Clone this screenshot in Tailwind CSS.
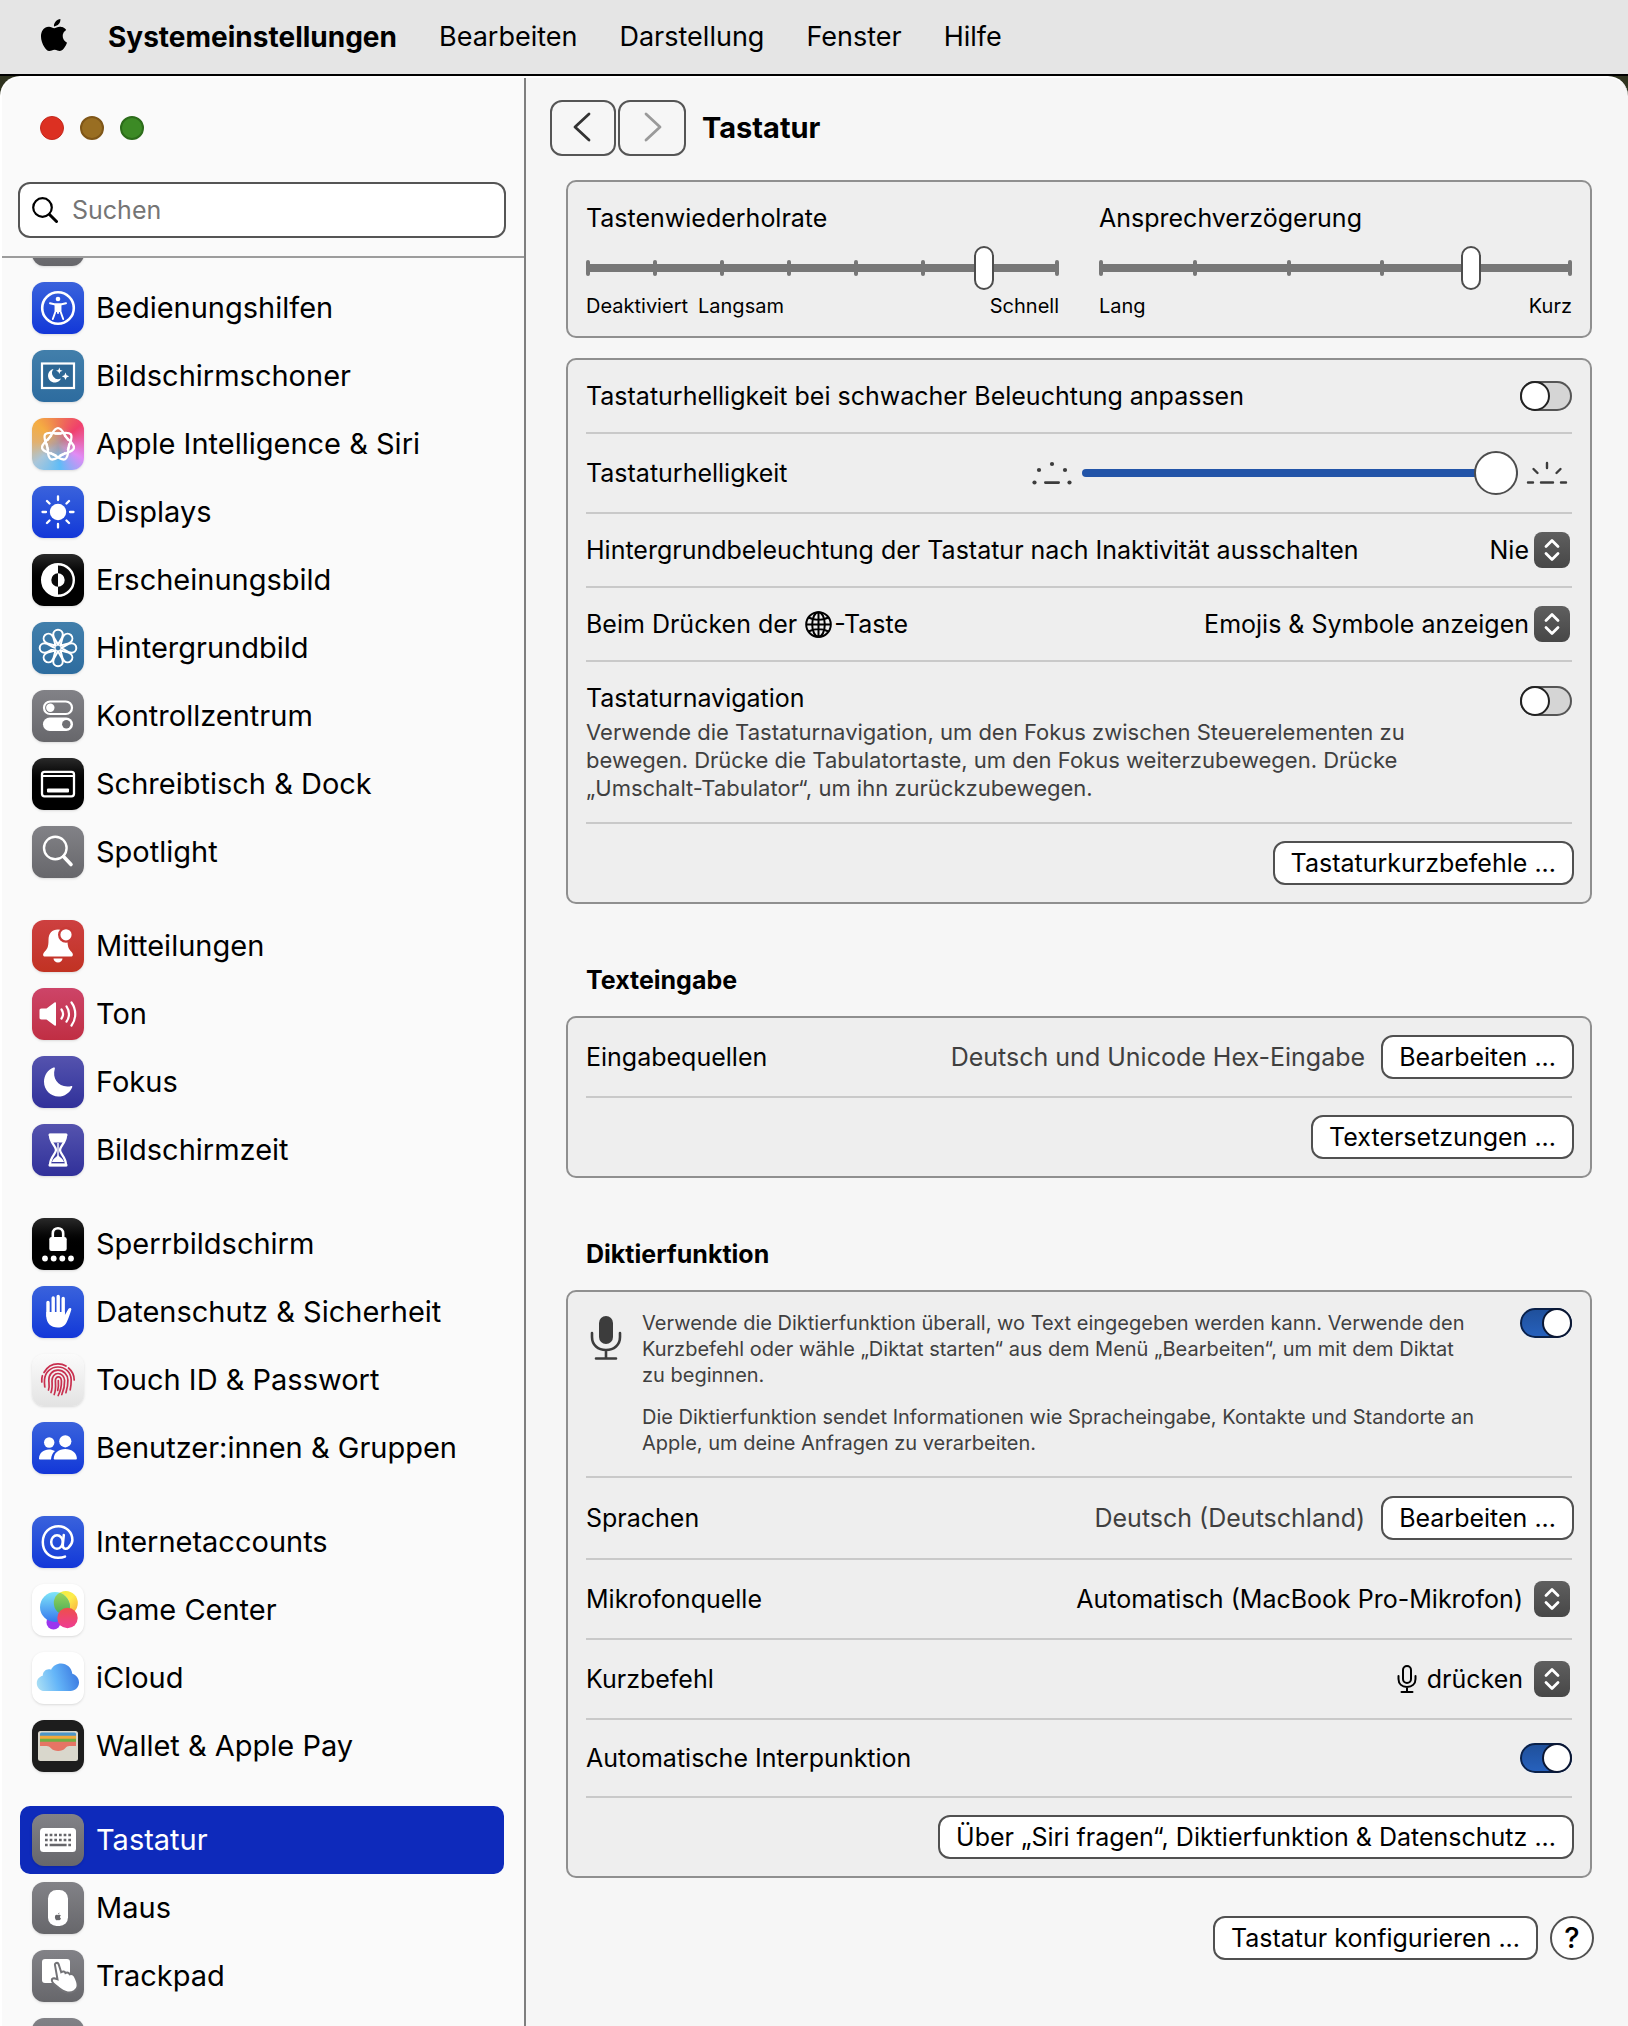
<!DOCTYPE html>
<html lang="de">
<head>
    <meta charset="UTF-8">
    <meta name="viewport" content="width=device-width, initial-scale=1.0">
    <title>Systemeinstellungen – Tastatur</title>
    <script src="https://cdn.jsdelivr.net/npm/@tailwindcss/browser@4"></script>
</head>
<body class="h-screen flex flex-col overflow-hidden bg-[#2f331f] font-['Inter',sans-serif] text-black">

    <!-- Menu bar -->
    <header class="flex h-[76px] shrink-0 items-center border-b-2 border-black bg-[#e5e5e5] pl-10">
        <svg class="h-8 w-7 -mt-1" viewBox="1.5 0 21 24" fill="#000"><path d="M12.152 6.896c-.948 0-2.415-1.078-3.96-1.04-2.04.027-3.91 1.183-4.961 3.014-2.117 3.675-.546 9.103 1.519 12.09 1.013 1.454 2.208 3.09 3.792 3.039 1.52-.065 2.09-.987 3.935-.987 1.831 0 2.35.987 3.96.948 1.637-.026 2.676-1.48 3.676-2.948 1.156-1.688 1.636-3.325 1.662-3.415-.039-.013-3.182-1.221-3.22-4.857-.026-3.04 2.48-4.494 2.597-4.559-1.429-2.09-3.623-2.324-4.39-2.376-2-.156-3.675 1.09-4.61 1.09zM15.53 3.83c.843-1.012 1.4-2.427 1.245-3.83-1.207.052-2.662.805-3.532 1.818-.78.896-1.454 2.338-1.273 3.714 1.338.104 2.715-.688 3.559-1.701"/></svg>
        <nav class="ml-10 flex gap-[42px] text-[27px] leading-8">
            <a href="#" class="text-[28px] leading-8 font-bold">Systemeinstellungen</a>
            <a href="#">Bearbeiten</a>
            <a href="#">Darstellung</a>
            <a href="#">Fenster</a>
            <a href="#">Hilfe</a>
        </nav>
    </header>

    <!-- Window -->
    <div class="flex min-h-0 flex-1 overflow-hidden rounded-t-[20px] border-l-2 border-t-2 border-white bg-[#f6f6f6]">

        <!-- Sidebar -->
        <aside class="flex w-[524px] shrink-0 flex-col border-r-2 border-[#7f7f7f] bg-[#fafafa]">
            <div class="border-b-2 border-[#9c9c9c] pt-[38px] pb-[18px] pl-4 pr-[18px]">
                <div class="flex gap-4 pl-[22px]">
                    <button aria-label="Schließen" class="size-6 rounded-full border border-[#c4281d] bg-[#dc3022]"></button>
                    <button aria-label="Minimieren" class="size-6 rounded-full border-2 border-[#7f5618] bg-[#996e22]"></button>
                    <button aria-label="Zoomen" class="size-6 rounded-full border-2 border-[#2c6c1a] bg-[#3c8a25]"></button>
                </div>
                <label class="mt-[42px] flex h-14 items-center gap-3.5 rounded-xl border-2 border-[#555] bg-white pl-3">
                    <svg class="size-[26px]" viewBox="0 0 26 26" fill="none" stroke="#000" stroke-linecap="round"><circle cx="10.5" cy="10.5" r="9.3" stroke-width="2.2"/><path d="M17.5 17.5l7 7" stroke-width="3"/></svg>
                    <input type="text" placeholder="Suchen" aria-label="Suchen" class="min-w-0 flex-1 bg-transparent text-[25px] leading-8 outline-none placeholder:text-[#757575]">
                </label>
            </div>

            <nav class="min-h-0 flex-1 overflow-hidden pl-[18px] pr-5 text-[29px] leading-8">
                <ul class="-mt-[52px]">
                    <li><a href="#" class="flex h-[68px] items-center gap-3 pl-3">
                        <svg class="size-[52px] rounded-xl bg-linear-to-b from-[#828287] to-[#67676b] shadow-sm" viewBox="0 0 52 52" fill="none" stroke="#fff"><circle cx="26" cy="26" r="13" stroke-width="3"/><circle cx="26" cy="26" r="15.500" stroke-width="3" stroke-dasharray="2 2"/><path d="M26 26V13M26 26l11 7M26 26l-11 7" stroke-width="2"/></svg>
                        Allgemein</a></li>
                    <li><a href="#" class="flex h-[68px] items-center gap-3 pl-3">
                        <svg class="size-[52px] rounded-xl bg-linear-to-b from-[#3a62dc] to-[#1336d8] shadow-sm" viewBox="0 0 52 52" fill="none" stroke="#fff" stroke-linecap="round" stroke-linejoin="round"><circle cx="26" cy="26" r="15.8" stroke-width="2.6"/><circle cx="26" cy="17" r="2.3" fill="#fff" stroke="none"/><path d="M18 21.300l5.500 1.200h5l5.500-1.200" stroke-width="2"/><path d="M23.500 22.500h5v7l2.700 7.500M23.500 22.500v7l-2.700 7.500M26 31v-1" stroke-width="1.900"/><path d="M23.500 22.500h5v7.500h-5z" fill="#fff" stroke="none"/></svg>
                        Bedienungshilfen</a></li>
                    <li><a href="#" class="flex h-[68px] items-center gap-3 pl-3">
                        <svg class="size-[52px] rounded-xl bg-linear-to-b from-[#427fab] to-[#2d6c9f] shadow-sm" viewBox="0 0 52 52" fill="#fff"><rect x="10" y="13.500" width="32" height="24.500" fill="#2d6795" stroke="#fff" stroke-width="2.200"/><path d="M21.500 19a6.800 6.800 0 1 0 7.500 9.500a6.200 6.200 0 0 1-7.500-9.500z"/><path d="M27.300 17.500l.9 2.400 2.400.9-2.400.9-.9 2.400-.9-2.400-2.400-.9 2.400-.9zM33.500 22.500l1.100 2.700 2.700 1.100-2.700 1.100-1.100 2.700-1.100-2.700-2.700-1.100 2.700-1.100z"/></svg>
                        Bildschirmschoner</a></li>
                    <li><a href="#" class="flex h-[68px] items-center gap-3 pl-3">
                        <svg class="size-[52px] rounded-xl bg-[radial-gradient(circle,#b09aa0_0%,#b09aa000_50%),conic-gradient(#ee7a52,#f0406c_50deg,#e08cf5_120deg,#5fbcf7_175deg,#a9c6da_230deg,#e2b06e_275deg,#f5ad42_315deg,#ee7a52)] shadow-sm" viewBox="0 0 52 52" fill="none" stroke="#fff" stroke-width="2.300">
                            <defs><path id="lobe" d="M-8.600-6.860C-5.500-10.800-4-16.300 0-16.300S5.500-10.800 8.600-6.860l2 2.800M-8.600-6.860l-2 2.800"/></defs>
                            <g transform="translate(26 26.500)"><use href="#lobe"/><use href="#lobe" transform="rotate(51.430)"/><use href="#lobe" transform="rotate(102.860)"/><use href="#lobe" transform="rotate(154.290)"/><use href="#lobe" transform="rotate(205.710)"/><use href="#lobe" transform="rotate(257.140)"/><use href="#lobe" transform="rotate(308.570)"/></g></svg>
                        Apple Intelligence &amp; Siri</a></li>
                    <li><a href="#" class="flex h-[68px] items-center gap-3 pl-3">
                        <svg class="size-[52px] rounded-xl bg-linear-to-b from-[#3a62dc] to-[#1336d8] shadow-sm" viewBox="0 0 52 52" fill="none" stroke="#fff" stroke-width="2.300" stroke-linecap="round"><circle cx="26" cy="26" r="8.200" fill="#fff" stroke="none"/><path d="M26 10.500v3.500M26 38v3.500M10.500 26H14M38 26h3.500M15 15l2.500 2.500M34.500 34.500L37 37M15 37l2.500-2.500M34.500 17.500L37 15"/></svg>
                        Displays</a></li>
                    <li><a href="#" class="flex h-[68px] items-center gap-3 pl-3">
                        <svg class="size-[52px] rounded-xl bg-linear-to-b from-[#2a2a2a] to-black to-60% shadow-sm" viewBox="0 0 52 52"><circle cx="26" cy="26" r="15.800" fill="#0a0a0a" stroke="#fff" stroke-width="2.400"/><path d="M26 10a16 16 0 0 0 0 32z" fill="#fff"/><path d="M26 19.300a6.700 6.700 0 0 0 0 13.400z" fill="#0a0a0a"/><path d="M26 19.300a6.700 6.700 0 0 1 0 13.400z" fill="#fff"/></svg>
                        Erscheinungsbild</a></li>
                    <li><a href="#" class="flex h-[68px] items-center gap-3 pl-3">
                        <svg class="size-[52px] rounded-xl bg-linear-to-b from-[#427fab] to-[#2d6c9f] shadow-sm" viewBox="0 0 52 52" fill="none" stroke="#fff" stroke-width="2">
                            <defs><path id="petal" d="M0-2.500C-1-7.500-4.800-9-4.800-13.500a4.800 4.800 0 0 1 9.600 0C4.800-9 1-7.500 0-2.500z"/></defs>
                            <g transform="translate(26 26)"><use href="#petal"/><use href="#petal" transform="rotate(45)"/><use href="#petal" transform="rotate(90)"/><use href="#petal" transform="rotate(135)"/><use href="#petal" transform="rotate(180)"/><use href="#petal" transform="rotate(225)"/><use href="#petal" transform="rotate(270)"/><use href="#petal" transform="rotate(315)"/></g></svg>
                        Hintergrundbild</a></li>
                    <li><a href="#" class="flex h-[68px] items-center gap-3 pl-3">
                        <svg class="size-[52px] rounded-xl bg-linear-to-b from-[#828287] to-[#67676b] shadow-sm" viewBox="0 0 52 52" fill="#fff"><rect x="12" y="11.500" width="28" height="12.500" rx="6.250" fill="none" stroke="#fff" stroke-width="2.200"/><circle cx="18.300" cy="17.700" r="4.200"/><rect x="11" y="27.500" width="30" height="13.500" rx="6.750"/><circle cx="34.300" cy="34.200" r="4.200" fill="#6f6f73"/></svg>
                        Kontrollzentrum</a></li>
                    <li><a href="#" class="flex h-[68px] items-center gap-3 pl-3">
                        <svg class="size-[52px] rounded-xl bg-linear-to-b from-[#2a2a2a] to-black to-60% shadow-sm" viewBox="0 0 52 52" fill="#fff"><rect x="10" y="13.800" width="32" height="24.500" rx="2.500" fill="none" stroke="#fff" stroke-width="2.300"/><path d="M11 17h30v2H11z"/><rect x="15" y="30.500" width="22" height="4" rx="1"/></svg>
                        Schreibtisch &amp; Dock</a></li>
                    <li><a href="#" class="flex h-[68px] items-center gap-3 pl-3">
                        <svg class="size-[52px] rounded-xl bg-linear-to-b from-[#828287] to-[#67676b] shadow-sm" viewBox="0 0 52 52" fill="none" stroke="#fff" stroke-linecap="round"><circle cx="23.300" cy="22" r="11.300" stroke-width="2.400"/><path d="M31.500 30.500l7.500 8" stroke-width="3.600"/></svg>
                        Spotlight</a></li>
                </ul>
                <ul class="mt-[26px]">
                    <li><a href="#" class="flex h-[68px] items-center gap-3 pl-3">
                        <svg class="size-[52px] rounded-xl bg-linear-to-b from-[#cd4040] to-[#c13222] shadow-sm" viewBox="0 0 52 52" fill="#fff"><path d="M26 9.500c-6 0-9.500 4-9.500 10.500 0 8-1.500 9-4.500 12.500-1.500 2-1 4 1 4h26c2 0 2.500-2 1-4-3-3.500-4.500-4.500-4.500-12.500C35.500 13.500 32 9.500 26 9.500zM21.500 38.500h9a4.500 4 0 0 1-9 0z"/><circle cx="34" cy="14.800" r="6.800" stroke="#c93a37" stroke-width="2.400"/></svg>
                        Mitteilungen</a></li>
                    <li><a href="#" class="flex h-[68px] items-center gap-3 pl-3">
                        <svg class="size-[52px] rounded-xl bg-linear-to-b from-[#cd4468] to-[#c02e43] shadow-sm" viewBox="0 0 52 52" fill="none" stroke="#fff" stroke-width="2.200" stroke-linecap="round"><path d="M9.500 20.500h5l8-6c1-.7 1.500-.3 1.500.7v21.600c0 1-.5 1.400-1.500.7l-8-6h-5c-1.500 0-2-.8-2-2v-7c0-1.300.5-2 2-2z" fill="#fff" stroke="none"/><path d="M29.500 21.500c1.900 2.700 1.900 6.300 0 9M34.500 18.300c3.300 4.600 3.300 10.800 0 15.400M39.500 14.500c5 6.800 5 16.200 0 23"/></svg>
                        Ton</a></li>
                    <li><a href="#" class="flex h-[68px] items-center gap-3 pl-3">
                        <svg class="size-[52px] rounded-xl bg-linear-to-b from-[#5553ae] to-[#31309a] shadow-sm" viewBox="0 0 52 52" fill="#fff"><path d="M21.500 11.600c1-.4 1.700.2 1.300 1.200-2.800 9.500 3.200 18 13 17.700 1.300 0 2.500-.4 3.500-.6.900-.1 1.300.5.900 1.300C37.800 37 32.300 40.500 26.500 40.500 18.500 40.500 12 34 12 25.800c0-6.200 3.800-12 9.500-14.200z"/></svg>
                        Fokus</a></li>
                    <li><a href="#" class="flex h-[68px] items-center gap-3 pl-3">
                        <svg class="size-[52px] rounded-xl bg-linear-to-b from-[#5553ae] to-[#31309a] shadow-sm" viewBox="0 0 52 52" fill="#fff"><path d="M18 11h16M18 41h16" stroke="#fff" stroke-width="3" stroke-linecap="round"/><path d="M18 11c0 8 6 11 6 15s-6 7-6 15h16c0-8-6-11-6-15s6-7 6-15z" fill="none" stroke="#fff" stroke-width="2.300"/><path d="M18 11h16c0 4-1 6-2.500 7.500h-11C19 17 18 15 18 11zM26 31c1.500 2 5 3.500 6 7H20c1-3.500 4.500-5 6-7z"/><path d="M25.300 19h1.400v13h-1.400z"/></svg>
                        Bildschirmzeit</a></li>
                </ul>
                <ul class="mt-[26px]">
                    <li><a href="#" class="flex h-[68px] items-center gap-3 pl-3">
                        <svg class="size-[52px] rounded-xl bg-linear-to-b from-[#2a2a2a] to-black to-60% shadow-sm" viewBox="0 0 52 52" fill="#fff"><rect x="17.300" y="19" width="17.400" height="14" rx="2.300"/><path d="M20.800 20v-4.500c0-7 10.400-7 10.400 0V20" fill="none" stroke="#fff" stroke-width="2.600"/><circle cx="13" cy="40.500" r="2.900"/><circle cx="21.700" cy="40.500" r="2.900"/><circle cx="30.300" cy="40.500" r="2.900"/><circle cx="39" cy="40.500" r="2.900"/></svg>
                        Sperrbildschirm</a></li>
                    <li><a href="#" class="flex h-[68px] items-center gap-3 pl-3">
                        <svg class="size-[52px] rounded-xl bg-linear-to-b from-[#3a62dc] to-[#1336d8] shadow-sm" viewBox="0 0 52 52" fill="none" stroke="#fff" stroke-width="3.400" stroke-linecap="round"><path d="M16 16.500V30M21.200 12v15M26.200 10.500v16M31.200 12.500v15"/><path d="M14.300 26h18.600v3l3.600-6.200c1-1.600 3.300-1 2.800.9-1.200 3.800-2.600 8.300-4.300 11.800-1.900 4-4.500 6-9.200 6-7 0-11.500-4.500-11.500-11.500z" fill="#fff" stroke="none"/></svg>
                        Datenschutz &amp; Sicherheit</a></li>
                    <li><a href="#" class="flex h-[68px] items-center gap-3 pl-3">
                        <svg class="size-[52px] rounded-xl bg-linear-to-b from-[#fbfbfb] to-[#e3e3e3] shadow-sm" viewBox="0 0 52 52" fill="none" stroke="#c8304f" stroke-width="1.700" stroke-linecap="round"><path d="M12 18.500C15 13 20 9.800 26 9.800c3 0 5.700.8 8 2.200M36.500 14c3.500 3 5.700 7.400 5.700 12M9.800 28v-2c0-1.500.2-3 .6-4.300M12.800 33c-.3-2.200-.5-4.500-.3-7.200C13 18.500 18.500 13 26 13c7.300 0 13 5.500 13.200 12.800 0 3.700-.2 6.700-1 10M16.500 36c1.200-3 .5-6.500.3-9.200C16.500 20.500 20.500 16.200 26 16.200c5.500 0 9.800 4.300 9.900 9.800.1 4.500-.6 8.500-2 12.700M19 38.500c1.600-4 1.200-7.300 1-11.500-.2-4.200 2.500-7.500 6-7.500s6.500 3 6.600 6.800c.2 5-.8 9.700-2.800 14.200M22.200 40.500c1.800-4.300 1.500-8.500 1.200-13.500-.2-5.300 5.700-5.500 6 0 .2 4.800-1 10-3.200 14.500M26.300 26.500c.3 3.500.2 7-.6 10"/></svg>
                        Touch ID &amp; Passwort</a></li>
                    <li><a href="#" class="flex h-[68px] items-center gap-3 pl-3">
                        <svg class="size-[52px] rounded-xl bg-linear-to-b from-[#3a62dc] to-[#1336d8] shadow-sm" viewBox="0 0 52 52" fill="#fff"><circle cx="17.200" cy="20.500" r="5.200"/><path d="M7 37c0-6 4.500-9.500 10-9.500 2.300 0 4.300.5 6 1.600-2.300 2-3.700 4.600-4 8.400H8c-.7 0-1-.2-1-.5z"/><circle cx="33.300" cy="19.300" r="6.100"/><path d="M21.700 36.800c0-6 5.300-9.800 11.600-9.800s11.600 3.800 11.600 9.800c0 .5-.3.700-1 .7H22.700c-.7 0-1-.2-1-.7z"/></svg>
                        Benutzer:innen &amp; Gruppen</a></li>
                </ul>
                <ul class="mt-[26px]">
                    <li><a href="#" class="flex h-[68px] items-center gap-3 pl-3">
                        <svg class="size-[52px] rounded-xl bg-linear-to-b from-[#3a62dc] to-[#1336d8] shadow-sm" viewBox="0 0 52 52" fill="none" stroke="#fff" stroke-width="2.500" stroke-linecap="round"><ellipse cx="25" cy="26" rx="5.800" ry="6.800"/><path d="M31.800 19l-1 9.500c-.3 5 3.500 5 5.800 3 1.800-1.700 3.800-4 3.800-7.500C40.400 16 34 10.200 26.500 10.200 17.500 10.200 10.800 17 10.800 26c0 9.500 6.200 15.800 15.200 15.800 2.500 0 5-.3 7-1.200"/></svg>
                        Internetaccounts</a></li>
                    <li><a href="#" class="flex h-[68px] items-center gap-3 pl-3">
                        <svg class="size-[52px] rounded-xl bg-white shadow" viewBox="0 0 52 52">
                            <defs>
                                <linearGradient id="gcBlue" x2="0" y2="1"><stop stop-color="#7fe6f8"/><stop offset="1" stop-color="#3578ee"/></linearGradient>
                                <linearGradient id="gcYellow" x2="1" y2="1"><stop stop-color="#e9ee3a"/><stop offset=".5" stop-color="#fdec4c"/><stop offset="1" stop-color="#f7a63c"/></linearGradient>
                                <linearGradient id="gcGreen" x2="0" y2="1"><stop stop-color="#9bd65c"/><stop offset="1" stop-color="#2f9e57"/></linearGradient>
                                <linearGradient id="gcPink" x2="0" y2="1"><stop stop-color="#ee4f4a"/><stop offset="1" stop-color="#ee3c93"/></linearGradient>
                                <clipPath id="gcClip"><circle cx="33.800" cy="19" r="12"/></clipPath>
                            </defs>
                            <circle cx="21.500" cy="38.500" r="7" fill="#9b35ee"/><circle cx="33.800" cy="19" r="12" fill="url(#gcYellow)"/><circle cx="23" cy="23" r="15" fill="url(#gcBlue)"/><circle cx="23" cy="23" r="15" fill="url(#gcGreen)" clip-path="url(#gcClip)"/><circle cx="35.500" cy="34" r="10.200" fill="url(#gcPink)"/></svg>
                        Game Center</a></li>
                    <li><a href="#" class="flex h-[68px] items-center gap-3 pl-3">
                        <svg class="size-[52px] rounded-xl bg-white shadow-sm" viewBox="0 0 52 52">
                            <defs><linearGradient id="cloud" y1=".6" y2=".4"><stop stop-color="#a5dcf5"/><stop offset=".45" stop-color="#64b5f8"/><stop offset="1" stop-color="#3a78e0"/></linearGradient></defs>
                            <path d="M12.500 39C8 39 4.800 35.500 4.800 31.200c0-4 2.600-6.800 6-7.500-.2-4.300 4-7.700 8.300-6 1.800-3.700 5.500-6.200 10-6.200 5.700 0 10.500 4.200 11.200 10.200 4 1.200 6.700 4.500 6.700 8.800 0 4.700-3.700 8.500-8.500 8.500z" fill="url(#cloud)"/></svg>
                        iCloud</a></li>
                    <li><a href="#" class="flex h-[68px] items-center gap-3 pl-3">
                        <svg class="size-[52px] rounded-xl bg-[#1d1d1d] shadow" viewBox="0 0 52 52"><rect x="6" y="11" width="40" height="30" rx="2.500" fill="#d9d7cc"/><path d="M8 16.500V14q0-1.500 1.500-1.500h33Q44 12.500 44 14v2.500z" fill="#4c96c8"/><path d="M8 15.800h36v4H8z" fill="#f2a93c"/><path d="M8 18.800h36v4H8z" fill="#6fb044"/><path d="M8 21.800h36v4.200h-6.500c-2 0-3 .8-4.300 2.300-3 3.700-11 3.700-14.200 0-1.400-1.500-2.500-2.300-4.500-2.300H8z" fill="#e67465"/></svg>
                        Wallet &amp; Apple Pay</a></li>
                </ul>
                <ul class="mt-[26px]">
                    <li><a href="#" aria-current="page" class="flex h-[68px] items-center gap-3 rounded-[10px] bg-[#0e2abb] pl-3 text-white">
                        <svg class="size-[52px] rounded-xl bg-linear-to-b from-[#828287] to-[#67676b] shadow-sm" viewBox="0 0 52 52"><rect x="8" y="14" width="36" height="24" rx="3.500" fill="#fff"/><path d="M13 21h26M13 26h26" stroke="#66666a" stroke-width="2.700" stroke-dasharray="2.700 1.960"/><path d="M13 31h2.700M17.600 31h17M36.300 31H39" stroke="#66666a" stroke-width="2.400"/></svg>
                        Tastatur</a></li>
                    <li><a href="#" class="flex h-[68px] items-center gap-3 pl-3">
                        <svg class="size-[52px] rounded-xl bg-linear-to-b from-[#828287] to-[#67676b] shadow-sm" viewBox="0 0 52 52"><rect x="16" y="8" width="20" height="36" rx="8.500" fill="#fff"/><path d="M26 33.200c1.500-.9 2.500-.2 2.800.3-1.200 1-.9 2.500.2 3.100-.8 2-1.800 1.700-3 1.400-1.300.4-2 .4-2.700-1-1.300-3.200.7-4.900 2.700-3.800zM26 32.500q0-1.600 1.500-2 0 1.700-1.500 2z" fill="#66666a"/></svg>
                        Maus</a></li>
                    <li><a href="#" class="flex h-[68px] items-center gap-3 pl-3">
                        <svg class="size-[52px] rounded-xl bg-linear-to-b from-[#828287] to-[#67676b] shadow-sm" viewBox="0 0 52 52"><rect x="10" y="9" width="28" height="24" rx="3" fill="#fff"/><path d="M23 15.200c-.7-2.300 2.800-3.300 3.600-1l2.600 8c2-1.300 3.600-.7 4.200.8 2-1 3.600-.2 4.200 1.200 2-.6 4.200.2 5 1.800 1.800 3.300 3.200 6.500 3 10-.3 4.500-5.400 7.100-10 6.500-5.600-.7-8.800-4.700-13.800-8.600-2.800-2.800-2.600-5.800.4-5.600l3.300 1z" fill="#fff" stroke="#737377" stroke-width="2"/></svg>
                        Trackpad</a></li>
                    <li><a href="#" aria-label="Drucker &amp; Scanner" class="flex h-[68px] items-center gap-3 pl-3">
                        <svg class="size-[52px] rounded-xl bg-linear-to-b from-[#828287] to-[#67676b] shadow-sm" viewBox="0 0 52 52" fill="#fff"><path d="M15 12h22v6H15zM10 20h32v14h-5v-5H15v5h-5zM17 31h18v9H17z"/></svg></a></li>
                </ul>
            </nav>
        </aside>

        <!-- Detail pane -->
        <main class="min-w-0 flex-1 overflow-hidden pt-[22px] text-[25px] leading-8">
            <div class="flex h-14 items-center gap-0.5 pl-6">
                <button aria-label="Zurück" class="flex h-14 w-[66px] items-center justify-center rounded-xl border-2 border-[#555]">
                    <svg class="h-8 w-5" viewBox="0 0 20 32" fill="none" stroke="#333" stroke-width="2.800" stroke-linecap="round" stroke-linejoin="round"><path d="M16 2L2 15l14 13"/></svg>
                </button>
                <button aria-label="Vor" class="flex h-14 w-[68px] items-center justify-center rounded-xl border-2 border-[#555]">
                    <svg class="h-8 w-5" viewBox="0 0 20 32" fill="none" stroke="#9a9a9a" stroke-width="2.800" stroke-linecap="round" stroke-linejoin="round"><path d="M4 2l14 13L4 28"/></svg>
                </button>
                <h1 class="ml-3.5 text-[29px] font-bold">Tastatur</h1>
            </div>

            <div class="mt-6 pl-10 pr-9">
                <!-- Repeat rate and delay -->
                <section class="grid grid-cols-2 gap-10 rounded-[10px] border-2 border-[#8f8f8f] bg-[#eee] px-[18px] pt-5 pb-[18px]">
                    <div>
                        <label for="rate" class="block">Tastenwiederholrate</label>
                        <div class="relative mt-3 flex h-11 items-center">
                            <div class="absolute inset-x-0 flex justify-between">
                                <i class="h-4 w-1 rounded-sm bg-[#777]"></i><i class="h-4 w-1 rounded-sm bg-[#777]"></i><i class="h-4 w-1 rounded-sm bg-[#777]"></i><i class="h-4 w-1 rounded-sm bg-[#777]"></i><i class="h-4 w-1 rounded-sm bg-[#777]"></i><i class="h-4 w-1 rounded-sm bg-[#777]"></i><i class="h-4 w-1"></i><i class="h-4 w-1 rounded-sm bg-[#777]"></i>
                            </div>
                            <input id="rate" type="range" min="0" max="7" value="6" class="relative h-2 w-full appearance-none bg-[#777] [&::-webkit-slider-thumb]:h-11 [&::-webkit-slider-thumb]:w-5 [&::-webkit-slider-thumb]:appearance-none [&::-webkit-slider-thumb]:rounded-full [&::-webkit-slider-thumb]:border-2 [&::-webkit-slider-thumb]:border-[#4d4d4d] [&::-webkit-slider-thumb]:bg-white">
                        </div>
                        <div class="mt-1 flex h-6 gap-2.5 text-[20px] leading-6"><span>Deaktiviert</span><span class="flex-1">Langsam</span><span>Schnell</span></div>
                    </div>
                    <div>
                        <label for="delay" class="block">Ansprechverzögerung</label>
                        <div class="relative mt-3 flex h-11 items-center">
                            <div class="absolute inset-x-0 flex justify-between">
                                <i class="h-4 w-1 rounded-sm bg-[#777]"></i><i class="h-4 w-1 rounded-sm bg-[#777]"></i><i class="h-4 w-1 rounded-sm bg-[#777]"></i><i class="h-4 w-1 rounded-sm bg-[#777]"></i><i class="h-4 w-1"></i><i class="h-4 w-1 rounded-sm bg-[#777]"></i>
                            </div>
                            <input id="delay" type="range" min="0" max="5" value="4" class="relative h-2 w-full appearance-none bg-[#777] [&::-webkit-slider-thumb]:h-11 [&::-webkit-slider-thumb]:w-5 [&::-webkit-slider-thumb]:appearance-none [&::-webkit-slider-thumb]:rounded-full [&::-webkit-slider-thumb]:border-2 [&::-webkit-slider-thumb]:border-[#4d4d4d] [&::-webkit-slider-thumb]:bg-white">
                        </div>
                        <div class="mt-1 flex h-6 justify-between text-[20px] leading-6"><span>Lang</span><span>Kurz</span></div>
                    </div>
                </section>

                <!-- Keyboard backlight -->
                <section class="mt-5 rounded-[10px] border-2 border-[#8f8f8f] bg-[#eee] px-[18px]">
                    <div class="flex min-h-[74px] items-center justify-between border-b-2 border-[#c9c9c9]">
                        <label for="auto-brightness">Tastaturhelligkeit bei schwacher Beleuchtung anpassen</label>
                        <input id="auto-brightness" type="checkbox" role="switch" class="flex h-[30px] w-[52px] appearance-none rounded-full bg-[#d5d5d5] inset-ring-2 inset-ring-[#555] before:size-[30px] before:rounded-full before:border-2 before:border-[#222] before:bg-white checked:justify-end checked:bg-linear-to-b checked:from-[#1f4f99] checked:to-[#2762bf] checked:inset-ring-[#0b2148] checked:before:border-[#0b1733]">
                    </div>
                    <div class="flex min-h-20 items-center border-b-2 border-[#c9c9c9] pr-1">
                        <label for="brightness" class="flex-1">Tastaturhelligkeit</label>
                        <svg class="h-6 w-10" viewBox="0 0 40 24" fill="#3c3c3c"><circle cx="20" cy="3" r="2.100"/><circle cx="7" cy="9" r="2.100"/><circle cx="33" cy="9" r="2.100"/><circle cx="2.500" cy="21.500" r="2.100"/><circle cx="37.500" cy="21.500" r="2.100"/><rect x="12" y="20.300" width="16" height="2.600" rx="1.300"/></svg>
                        <input id="brightness" type="range" min="0" max="100" value="100" class="ml-2.5 mr-2 h-2 w-[436px] appearance-none rounded-full bg-[#2254a8] [&::-webkit-slider-thumb]:size-11 [&::-webkit-slider-thumb]:appearance-none [&::-webkit-slider-thumb]:rounded-full [&::-webkit-slider-thumb]:border-2 [&::-webkit-slider-thumb]:border-[#4d4d4d] [&::-webkit-slider-thumb]:bg-white">
                        <svg class="h-6 w-[42px]" viewBox="0 0 42 24" fill="none" stroke="#3c3c3c" stroke-width="2.400" stroke-linecap="round"><path d="M21 2v5M7.500 8l4 4M34.500 8l-4 4M2 21.500h5M15 21.500h12M35 21.500h5"/></svg>
                    </div>
                    <div class="flex min-h-[74px] items-center justify-between border-b-2 border-[#c9c9c9]">
                        <label for="backlight-off">Hintergrundbeleuchtung der Tastatur nach Inaktivität ausschalten</label>
                        <div class="relative flex items-center">
                            <select id="backlight-off" class="field-sizing-content appearance-none bg-transparent pr-[43px]"><option>Nie</option></select>
                            <span class="pointer-events-none absolute right-0.5 flex size-9 items-center justify-center rounded-lg bg-linear-to-b from-[#5f5f5f] to-[#474747]"><svg class="h-6 w-4" viewBox="0 0 16 24" fill="none" stroke="#fff" stroke-width="2.800" stroke-linecap="round" stroke-linejoin="round"><path d="M2 8.500l6-6 6 6M2 15.500l6 6 6-6"/></svg></span>
                        </div>
                    </div>
                    <div class="flex min-h-[74px] items-center justify-between border-b-2 border-[#c9c9c9]">
                        <label for="globe-key" class="flex items-center">Beim Drücken der
                            <svg class="ml-2 mr-0.5 size-[27px]" viewBox="0 0 27 27" fill="none" stroke="#000" stroke-width="2"><circle cx="13.500" cy="13.500" r="12.300"/><ellipse cx="13.500" cy="13.500" rx="6.300" ry="12.300"/><path d="M13.500 1v25M1 13.500h25M3.500 6.500c6 3 14 3 20 0M3.500 20.500c6-3 14-3 20 0"/></svg>-Taste</label>
                        <div class="relative flex items-center">
                            <select id="globe-key" class="field-sizing-content appearance-none bg-transparent pr-[43px]"><option>Emojis &amp; Symbole anzeigen</option></select>
                            <span class="pointer-events-none absolute right-0.5 flex size-9 items-center justify-center rounded-lg bg-linear-to-b from-[#5f5f5f] to-[#474747]"><svg class="h-6 w-4" viewBox="0 0 16 24" fill="none" stroke="#fff" stroke-width="2.800" stroke-linecap="round" stroke-linejoin="round"><path d="M2 8.500l6-6 6 6M2 15.500l6 6 6-6"/></svg></span>
                        </div>
                    </div>
                    <div class="flex items-start justify-between border-b-2 border-[#c9c9c9] py-5">
                        <div class="max-w-[860px]">
                            <label for="keyboard-nav" class="block">Tastaturnavigation</label>
                            <p class="mt-1 text-[22px] leading-7 text-[#3f3f3f]">Verwende die Tastaturnavigation, um den Fokus zwischen Steuerelementen zu bewegen. Drücke die Tabulatortaste, um den Fokus weiterzubewegen. Drücke „Umschalt-Tabulator“, um ihn zurückzubewegen.</p>
                        </div>
                        <input id="keyboard-nav" type="checkbox" role="switch" class="mt-1 flex h-[30px] w-[52px] appearance-none rounded-full bg-[#d5d5d5] inset-ring-2 inset-ring-[#555] before:size-[30px] before:rounded-full before:border-2 before:border-[#222] before:bg-white checked:justify-end checked:bg-linear-to-b checked:from-[#1f4f99] checked:to-[#2762bf] checked:inset-ring-[#0b2148] checked:before:border-[#0b1733]">
                    </div>
                    <div class="flex min-h-[78px] items-center justify-end">
                        <button class="-mr-0.5 h-11 rounded-xl border-2 border-[#505050] bg-white px-4">Tastaturkurzbefehle ...</button>
                    </div>
                </section>

                <!-- Text input -->
                <h2 class="mt-15 mb-5 pl-5 font-bold">Texteingabe</h2>
                <section class="rounded-[10px] border-2 border-[#8f8f8f] bg-[#eee] px-[18px]">
                    <div class="flex min-h-20 items-center border-b-2 border-[#c9c9c9]">
                        <span class="flex-1">Eingabequellen</span>
                        <span class="mr-4 text-[#3f3f3f]">Deutsch und Unicode Hex-Eingabe</span>
                        <button class="-mr-0.5 h-11 rounded-xl border-2 border-[#505050] bg-white px-4">Bearbeiten ...</button>
                    </div>
                    <div class="flex min-h-[78px] items-center justify-end">
                        <button class="-mr-0.5 h-11 rounded-xl border-2 border-[#505050] bg-white px-4">Textersetzungen ...</button>
                    </div>
                </section>

                <!-- Dictation -->
                <h2 class="mt-15 mb-5 pl-5 font-bold">Diktierfunktion</h2>
                <section class="rounded-[10px] border-2 border-[#8f8f8f] bg-[#eee] px-[18px]">
                    <div class="flex items-start border-b-2 border-[#c9c9c9] pt-4 pb-5">
                        <svg class="mt-2 ml-1 mr-5 h-11 w-8 shrink-0" viewBox="0 0 32 44" fill="none" stroke="#3c3c3c" stroke-width="2.600" stroke-linecap="round"><rect x="9" y="0" width="14" height="28" rx="7" fill="#3c3c3c" stroke="none"/><path d="M2 17v4c0 8 6 13 14 13s14-5 14-13v-4M16 34v8M6 42.500h20"/></svg>
                        <div class="flex-1 pt-0.5 text-[20px] leading-[26px] text-[#3f3f3f]">
                            <p class="max-w-[836px]">Verwende die Diktierfunktion überall, wo Text eingegeben werden kann. Verwende den Kurzbefehl oder wähle „Diktat starten“ aus dem Menü „Bearbeiten“, um mit dem Diktat zu beginnen.</p>
                            <p class="mt-4 max-w-[860px]">Die Diktierfunktion sendet Informationen wie Spracheingabe, Kontakte und Standorte an Apple, um deine Anfragen zu verarbeiten.</p>
                        </div>
                        <input type="checkbox" role="switch" checked aria-label="Diktierfunktion" class="flex h-[30px] w-[52px] appearance-none rounded-full bg-[#d5d5d5] inset-ring-2 inset-ring-[#555] before:size-[30px] before:rounded-full before:border-2 before:border-[#222] before:bg-white checked:justify-end checked:bg-linear-to-b checked:from-[#1f4f99] checked:to-[#2762bf] checked:inset-ring-[#0b2148] checked:before:border-[#0b1733]">
                    </div>
                    <div class="flex min-h-[82px] items-center border-b-2 border-[#c9c9c9]">
                        <span class="flex-1">Sprachen</span>
                        <span class="mr-4 text-[#3f3f3f]">Deutsch (Deutschland)</span>
                        <button class="-mr-0.5 h-11 rounded-xl border-2 border-[#505050] bg-white px-4">Bearbeiten ...</button>
                    </div>
                    <div class="flex min-h-20 items-center justify-between border-b-2 border-[#c9c9c9]">
                        <label for="mic">Mikrofonquelle</label>
                        <div class="relative flex items-center">
                            <select id="mic" class="field-sizing-content appearance-none bg-transparent pr-[49px]"><option>Automatisch (MacBook Pro-Mikrofon)</option></select>
                            <span class="pointer-events-none absolute right-0.5 flex size-9 items-center justify-center rounded-lg bg-linear-to-b from-[#5f5f5f] to-[#474747]"><svg class="h-6 w-4" viewBox="0 0 16 24" fill="none" stroke="#fff" stroke-width="2.800" stroke-linecap="round" stroke-linejoin="round"><path d="M2 8.500l6-6 6 6M2 15.500l6 6 6-6"/></svg></span>
                        </div>
                    </div>
                    <div class="flex min-h-20 items-center justify-between border-b-2 border-[#c9c9c9]">
                        <label for="shortcut">Kurzbefehl</label>
                        <div class="relative flex items-center">
                            <svg class="mr-2.5 h-7 w-5" viewBox="0 0 20 28" fill="none" stroke="#000" stroke-width="2" stroke-linecap="round"><rect x="6" y="1" width="8" height="17" rx="4"/><path d="M1.500 11v3c0 5 3.500 8 8.500 8s8.500-3 8.500-8v-3M10 22v5M4.500 27h11"/></svg>
                            <select id="shortcut" class="field-sizing-content appearance-none bg-transparent pr-[49px]"><option>drücken</option></select>
                            <span class="pointer-events-none absolute right-0.5 flex size-9 items-center justify-center rounded-lg bg-linear-to-b from-[#5f5f5f] to-[#474747]"><svg class="h-6 w-4" viewBox="0 0 16 24" fill="none" stroke="#fff" stroke-width="2.800" stroke-linecap="round" stroke-linejoin="round"><path d="M2 8.500l6-6 6 6M2 15.500l6 6 6-6"/></svg></span>
                        </div>
                    </div>
                    <div class="flex min-h-[78px] items-center justify-between border-b-2 border-[#c9c9c9]">
                        <label for="punctuation">Automatische Interpunktion</label>
                        <input id="punctuation" type="checkbox" role="switch" checked class="flex h-[30px] w-[52px] appearance-none rounded-full bg-[#d5d5d5] inset-ring-2 inset-ring-[#555] before:size-[30px] before:rounded-full before:border-2 before:border-[#222] before:bg-white checked:justify-end checked:bg-linear-to-b checked:from-[#1f4f99] checked:to-[#2762bf] checked:inset-ring-[#0b2148] checked:before:border-[#0b1733]">
                    </div>
                    <div class="flex min-h-[78px] items-center justify-end">
                        <button class="-mr-0.5 h-11 rounded-xl border-2 border-[#505050] bg-white px-4">Über „Siri fragen“, Diktierfunktion &amp; Datenschutz ...</button>
                    </div>
                </section>

                <div class="-mr-0.5 mt-[38px] flex justify-end gap-3">
                    <button class="h-11 rounded-xl border-2 border-[#505050] bg-white px-4">Tastatur konfigurieren ...</button>
                    <button aria-label="Hilfe" class="size-11 rounded-full border-2 border-[#505050] bg-white text-[29px] font-medium">?</button>
                </div>
            </div>
        </main>
    </div>
</body>
</html>
